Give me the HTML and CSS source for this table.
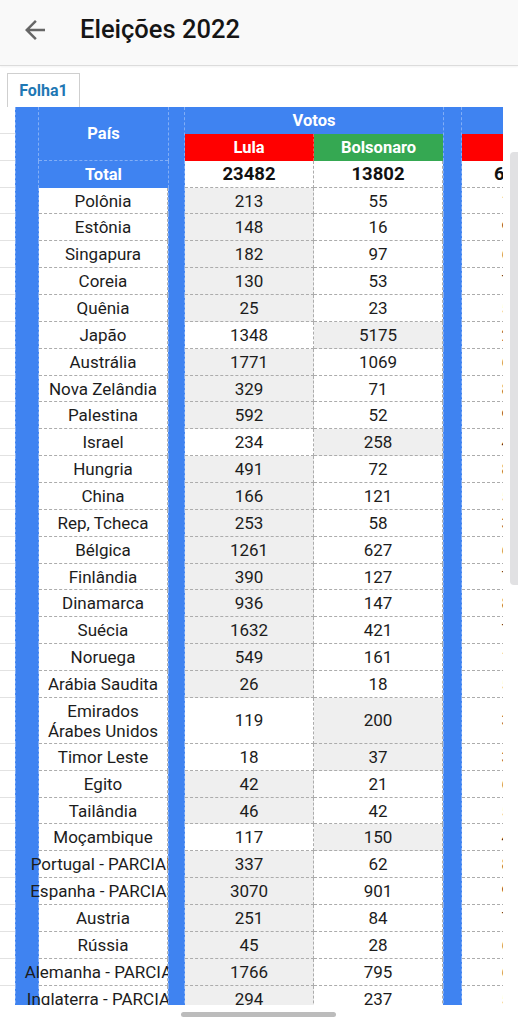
FILE: index.html
```html
<!DOCTYPE html>
<html lang="pt">
<head>
<meta charset="utf-8">
<title>Eleições 2022</title>
<link rel="stylesheet" href="styles.css">
</head>
<body>
<header class="appbar">
  <svg class="back" viewBox="0 0 24 24"><path d="M20 11H7.83l5.59-5.59L12 4l-8 8 8 8 1.41-1.41L7.83 13H20v-2z"/></svg>
  <h1 class="title">Eleições 2022</h1>
</header>
<div class="tabs"><div class="tab">Folha1</div></div>
<div class="sheet">
  <div class="head">
    <div class="g r1"></div><div class="g r2"></div>
    <div class="b hb1"></div>
    <div class="hpais">País</div>
    <div class="b hb2"></div>
    <div class="votos">Votos</div>
    <div class="lula">Lula</div>
    <div class="bol">Bolsonaro</div>
    <div class="b hb3"></div>
    <div class="xh1"></div>
    <div class="xh2"></div>
  </div>
  <div class="row total"><div class="g"></div><div class="b"></div><div class="tl">Total</div><div class="b"></div><div class="n tot">23482</div><div class="n tot">13802</div><div class="b"></div><div class="x tot">64316</div></div>
  <div class="row"><div class="g"></div><div class="b"></div><div class="c"><span>Polônia</span></div><div class="b"></div><div class="n w">213</div><div class="n">55</div><div class="b"></div><div class="x">1706</div></div>
  <div class="row"><div class="g"></div><div class="b"></div><div class="c"><span>Estônia</span></div><div class="b"></div><div class="n w">148</div><div class="n">16</div><div class="b"></div><div class="x">9183</div></div>
  <div class="row"><div class="g"></div><div class="b"></div><div class="c"><span>Singapura</span></div><div class="b"></div><div class="n w">182</div><div class="n">97</div><div class="b"></div><div class="x">6120</div></div>
  <div class="row"><div class="g"></div><div class="b"></div><div class="c"><span>Coreia</span></div><div class="b"></div><div class="n w">130</div><div class="n">53</div><div class="b"></div><div class="x">7132</div></div>
  <div class="row"><div class="g"></div><div class="b"></div><div class="c"><span>Quênia</span></div><div class="b"></div><div class="n w">25</div><div class="n">23</div><div class="b"></div><div class="x">5215</div></div>
  <div class="row"><div class="g"></div><div class="b"></div><div class="c"><span>Japão</span></div><div class="b"></div><div class="n">1348</div><div class="n w">5175</div><div class="b"></div><div class="x">2156</div></div>
  <div class="row"><div class="g"></div><div class="b"></div><div class="c"><span>Austrália</span></div><div class="b"></div><div class="n w">1771</div><div class="n">1069</div><div class="b"></div><div class="x">6218</div></div>
  <div class="row"><div class="g"></div><div class="b"></div><div class="c"><span>Nova Zelândia</span></div><div class="b"></div><div class="n w">329</div><div class="n">71</div><div class="b"></div><div class="x">8412</div></div>
  <div class="row"><div class="g"></div><div class="b"></div><div class="c"><span>Palestina</span></div><div class="b"></div><div class="n w">592</div><div class="n">52</div><div class="b"></div><div class="x">9047</div></div>
  <div class="row"><div class="g"></div><div class="b"></div><div class="c"><span>Israel</span></div><div class="b"></div><div class="n">234</div><div class="n w">258</div><div class="b"></div><div class="x">4312</div></div>
  <div class="row"><div class="g"></div><div class="b"></div><div class="c"><span>Hungria</span></div><div class="b"></div><div class="n w">491</div><div class="n">72</div><div class="b"></div><div class="x">8106</div></div>
  <div class="row"><div class="g"></div><div class="b"></div><div class="c"><span>China</span></div><div class="b"></div><div class="n w">166</div><div class="n">121</div><div class="b"></div><div class="x">5018</div></div>
  <div class="row"><div class="g"></div><div class="b"></div><div class="c"><span>Rep, Tcheca</span></div><div class="b"></div><div class="n w">253</div><div class="n">58</div><div class="b"></div><div class="x">3161</div></div>
  <div class="row"><div class="g"></div><div class="b"></div><div class="c"><span>Bélgica</span></div><div class="b"></div><div class="n w">1261</div><div class="n">627</div><div class="b"></div><div class="x">6302</div></div>
  <div class="row"><div class="g"></div><div class="b"></div><div class="c"><span>Finlândia</span></div><div class="b"></div><div class="n w">390</div><div class="n">127</div><div class="b"></div><div class="x">7140</div></div>
  <div class="row"><div class="g"></div><div class="b"></div><div class="c"><span>Dinamarca</span></div><div class="b"></div><div class="n w">936</div><div class="n">147</div><div class="b"></div><div class="x">8215</div></div>
  <div class="row"><div class="g"></div><div class="b"></div><div class="c"><span>Suécia</span></div><div class="b"></div><div class="n w">1632</div><div class="n">421</div><div class="b"></div><div class="x">7360</div></div>
  <div class="row"><div class="g"></div><div class="b"></div><div class="c"><span>Noruega</span></div><div class="b"></div><div class="n w">549</div><div class="n">161</div><div class="b"></div><div class="x">1204</div></div>
  <div class="row"><div class="g"></div><div class="b"></div><div class="c"><span>Arábia Saudita</span></div><div class="b"></div><div class="n w">26</div><div class="n">18</div><div class="b"></div><div class="x">5103</div></div>
  <div class="row tall"><div class="g"></div><div class="b"></div><div class="c wrap"><span>Emirados<br>Árabes Unidos</span></div><div class="b"></div><div class="n">119</div><div class="n w">200</div><div class="b"></div><div class="x">3120</div></div>
  <div class="row"><div class="g"></div><div class="b"></div><div class="c"><span>Timor Leste</span></div><div class="b"></div><div class="n">18</div><div class="n w">37</div><div class="b"></div><div class="x">3017</div></div>
  <div class="row"><div class="g"></div><div class="b"></div><div class="c"><span>Egito</span></div><div class="b"></div><div class="n w">42</div><div class="n">21</div><div class="b"></div><div class="x">6014</div></div>
  <div class="row"><div class="g"></div><div class="b"></div><div class="c"><span>Tailândia</span></div><div class="b"></div><div class="n w">46</div><div class="n">42</div><div class="b"></div><div class="x">5102</div></div>
  <div class="row"><div class="g"></div><div class="b"></div><div class="c"><span>Moçambique</span></div><div class="b"></div><div class="n">117</div><div class="n w">150</div><div class="b"></div><div class="x">4130</div></div>
  <div class="row"><div class="g"></div><div class="b"></div><div class="c"><span>Portugal - PARCIAL</span></div><div class="b"></div><div class="n w">337</div><div class="n">62</div><div class="b"></div><div class="x">8415</div></div>
  <div class="row"><div class="g"></div><div class="b"></div><div class="c"><span>Espanha - PARCIAL</span></div><div class="b"></div><div class="n w">3070</div><div class="n">901</div><div class="b"></div><div class="x">9302</div></div>
  <div class="row"><div class="g"></div><div class="b"></div><div class="c"><span>Austria</span></div><div class="b"></div><div class="n w">251</div><div class="n">84</div><div class="b"></div><div class="x">7126</div></div>
  <div class="row"><div class="g"></div><div class="b"></div><div class="c"><span>Rússia</span></div><div class="b"></div><div class="n w">45</div><div class="n">28</div><div class="b"></div><div class="x">6041</div></div>
  <div class="row"><div class="g"></div><div class="b"></div><div class="c"><span>Alemanha - PARCIAL</span></div><div class="b"></div><div class="n w">1766</div><div class="n">795</div><div class="b"></div><div class="x">6230</div></div>
  <div class="row"><div class="g"></div><div class="b"></div><div class="c"><span>Inglaterra - PARCIAL</span></div><div class="b"></div><div class="n w">294</div><div class="n">237</div><div class="b"></div><div class="x">5106</div></div>
</div>
<div class="vscroll"></div>
<div class="hscroll"></div>
</body>
</html>
```

FILE: styles.css
```css
:root {
  --cols: 15px 24px 129px 17px 129px 129px 19px 118px;
  --rowh: 26.86px;
  --blue: #3f83f1;
  --dash: 1px dashed #acacac;
  --bdash: 1px dashed rgba(255, 255, 255, 0.35);
}

* { box-sizing: border-box; }

body {
  margin: 0;
  width: 518px;
  height: 1024px;
  overflow: hidden;
  position: relative;
  background: #fff;
  font-family: Roboto, "Noto Sans", sans-serif;
  color: #1c1c1c;
}

.appbar {
  height: 66px;
  background: #f9f9f9;
  border-bottom: 1px solid #dcdcdc;
  box-shadow: 0 1px 2px rgba(0, 0, 0, 0.05);
  display: flex;
  align-items: flex-start;
}

.back {
  width: 30px;
  height: 30px;
  margin: 15px 0 0 20px;
  fill: #666;
}

.title {
  margin: 14px 0 0 30px;
  font-size: 25.5px;
  line-height: 30px;
  font-weight: 500;
  color: #151515;
}

.tabs {
  height: 41px;
  padding: 7px 0 0 7px;
}

.tab {
  width: 73px;
  height: 34px;
  border: 1px solid #cfcfcf;
  border-bottom: 0;
  background: #fff;
  display: flex;
  align-items: center;
  justify-content: center;
  color: #1f78b4;
  font-weight: 700;
  font-size: 16px;
}

.sheet {
  width: 503px;
  height: 898px;
  overflow: hidden;
}

.head {
  display: grid;
  grid-template-columns: var(--cols);
  grid-template-rows: var(--rowh) var(--rowh);
  width: 580px;
}

.row {
  display: grid;
  grid-template-columns: var(--cols);
  height: var(--rowh);
  width: 580px;
}

.row.tall { height: 46px; }

.g {
  border-bottom: 1px solid #e2e2e2;
}
.head .r1 { grid-column: 1; grid-row: 1; }
.head .r2 { grid-column: 1; grid-row: 2; }

.b {
  background: var(--blue);
  border-left: var(--bdash);
  border-right: var(--bdash);
}
.hb1 { grid-column: 2; grid-row: 1 / 3; }
.hb2 { grid-column: 4; grid-row: 1 / 3; }
.hb3 { grid-column: 7; grid-row: 1 / 3; }

.hpais, .votos, .lula, .bol, .tl {
  display: flex;
  align-items: center;
  justify-content: center;
  color: #fff;
  font-weight: 700;
  font-size: 16.5px;
}

.hpais {
  grid-column: 3;
  grid-row: 1 / 3;
  background: var(--blue);
  border-bottom: var(--bdash);
}

.votos {
  grid-column: 5 / 7;
  grid-row: 1;
  background: var(--blue);
}

.lula {
  grid-column: 5;
  grid-row: 2;
  background: #ff0000;
  border-right: 1px dashed rgba(255, 255, 255, 0.3);
}

.bol {
  grid-column: 6;
  grid-row: 2;
  background: #35a852;
}

.xh1 { grid-column: 8; grid-row: 1; background: var(--blue); }
.xh2 { grid-column: 8; grid-row: 2; background: #ff0000; }

.tl {
  background: var(--blue);
}

.c, .n, .x {
  display: flex;
  align-items: center;
  justify-content: center;
  background: #fff;
  border-right: var(--dash);
  border-bottom: var(--dash);
  font-size: 17px;
  color: #1c1c1c;
  white-space: nowrap;
}

.c {
  clip-path: inset(-1px 0 -1px -40px);
}

.c span {
  flex-shrink: 0;
}

.c.wrap {
  white-space: normal;
  text-align: center;
  line-height: 20px;
}

.c.wrap span {
  padding-top: 2px;
}

.n.w {
  background: #efefef;
}

.tot {
  font-weight: 700;
  font-size: 18.5px;
  color: #111;
}

.vscroll {
  position: absolute;
  left: 510px;
  top: 152px;
  width: 8px;
  height: 433px;
  background: #e1e1e3;
  border-radius: 4px 0 0 4px;
}

.hscroll {
  position: absolute;
  left: 181px;
  top: 1012px;
  width: 155px;
  height: 5px;
  background: #bcbcbc;
  border-radius: 3px;
}
```
